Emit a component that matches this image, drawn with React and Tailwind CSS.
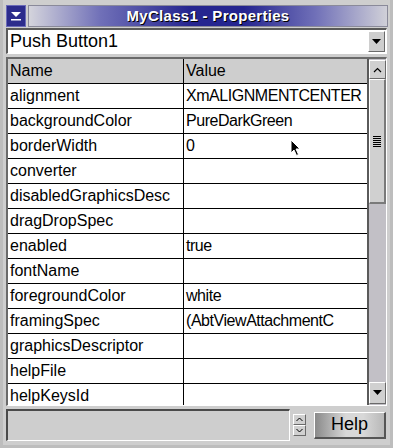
import React from 'react';

const rows = [
    ['alignment', 'XmALIGNMENTCENTER'],
    ['backgroundColor', 'PureDarkGreen'],
    ['borderWidth', '0'],
    ['converter', ''],
    ['disabledGraphicsDesc', ''],
    ['dragDropSpec', ''],
    ['enabled', 'true'],
    ['fontName', ''],
    ['foregroundColor', 'white'],
    ['framingSpec', '(AbtViewAttachmentC'],
    ['graphicsDescriptor', ''],
    ['helpFile', ''],
    ['helpKeysId', ''],
];

const font = { fontFamily: '"Liberation Sans", Arial, sans-serif' };

const Caret = ({ up }) => (
    <svg width="9" height="6" viewBox="0 0 9 6">
        {up ? (
            <path d="M1 5 L4.5 1.5 L8 5" fill="none" stroke="#000" strokeWidth="1.2" />
        ) : (
            <path d="M1 1 L4.5 4.5 L8 1" fill="none" stroke="#000" strokeWidth="1.2" />
        )}
    </svg>
);

const App = () => {
    return (
        <div
            className="w-[393px] h-[448px] bg-[#cecece] flex flex-col overflow-hidden border-l-[3px] border-r-[3px] border-b-[3px] border-[#bdbdbd] relative"
            style={font}
        >
            {/* Title bar */}
            <div className="h-[28px] flex items-stretch pt-[5px] pb-[1px] pl-[3px] pr-[2px] gap-[2px]">
                <div className="w-[20px] bg-[#2c2c8c] border border-[#6a6ab8] flex items-center justify-center">
                    <svg width="12" height="10" viewBox="0 0 12 10">
                        <path d="M1 1 H11 L6 6 Z" fill="#fff" />
                        <rect x="1" y="8" width="10" height="1.5" fill="#fff" />
                    </svg>
                </div>
                <div className="flex-1 flex items-center justify-center border border-[#8a8a9a] bg-[linear-gradient(90deg,#d4d4dc_0%,#7070b8_20%,#25258f_45%,#25258f_60%,#7070b8_80%,#d0d0d8_100%)]">
                    <span className="text-white font-bold text-[15px] tracking-[0.3px] [text-shadow:1px_1px_0_#000]">
                        MyClass1 - Properties
                    </span>
                </div>
            </div>

            {/* Combo */}
            <div className="mx-[3px] h-[26px] flex items-stretch border-t-2 border-l-2 border-[#5a5a5a] border-b border-r border-b-[#ffffff] border-r-[#ffffff] bg-white">
                <div className="flex-1 flex items-center pl-[2px] text-[18px] text-black">Push Button1</div>
                <div className="w-[17px] my-[1px] mr-[1px] bg-[#cecece] border-t border-l border-white border-b border-r border-b-[#6a6a6a] border-r-[#6a6a6a] flex items-center justify-center">
                    <svg width="9" height="6" viewBox="0 0 9 6">
                        <path d="M0 0 H9 L4.5 5 Z" fill="#000" />
                    </svg>
                </div>
            </div>

            {/* Table + scrollbar */}
            <div className="mx-[3px] mt-[3px] h-[349px] flex border-t-2 border-l-2 border-[#6a6a6a] border-b border-r border-b-white border-r-white">
                <div className="flex-1 overflow-hidden bg-white">
                    <div className="h-[25px] flex bg-[#cecece] border-b border-black text-[16px]">
                        <div className="w-[176px] border-r border-black flex items-center pl-[2px]">Name</div>
                        <div className="flex-1 flex items-center pl-[2px]">Value</div>
                    </div>
                    {rows.map(([name, value], i) => (
                        <div key={i} className="h-[25px] flex border-b border-black text-[16px] text-black">
                            <div className="w-[176px] shrink-0 border-r border-black flex items-center pl-[2px] whitespace-nowrap overflow-hidden">
                                {name}
                            </div>
                            <div className="flex-1 flex items-center pl-[2px] whitespace-nowrap overflow-hidden tracking-[-0.45px]">
                                {value}
                            </div>
                        </div>
                    ))}
                </div>
                <div className="w-[19px] bg-[#c2c0c6] border-l-2 border-[#5a5a5a] flex flex-col">
                    <div className="h-[19px] mt-[1px] bg-[#d0d0d0] border-t border-l border-white border-b border-r border-b-[#6a6a6a] border-r-[#6a6a6a] flex items-center justify-center">
                        <Caret up />
                    </div>
                    <div className="h-[125px] bg-[#d0d0d0] border-t border-l border-white border-b-2 border-r-2 border-b-[#7a7a7a] border-r-[#7a7a7a] flex items-center justify-center">
                        <div className="flex flex-col gap-[1px]">
                            {[0, 1, 2, 3, 4, 5].map((k) => (
                                <div key={k} className="w-[8px] h-[1px] bg-black" />
                            ))}
                        </div>
                    </div>
                    <div className="flex-1" />
                    <div className="h-[22px] mb-[1px] bg-[#d0d0d0] border-t border-l border-white border-b border-r border-b-[#6a6a6a] border-r-[#6a6a6a] flex items-center justify-center">
                        <svg width="9" height="6" viewBox="0 0 9 6">
                            <path d="M0 0 H9 L4.5 5 Z" fill="#000" />
                        </svg>
                    </div>
                </div>
            </div>

            {/* Bottom bar */}
            <div className="flex items-center mx-[3px] mt-[3px] gap-[3px]">
                <div className="w-[284px] h-[32px] bg-[#cecece] border-t-2 border-l-2 border-[#4a4a4a] border-b border-r border-b-white border-r-white" />
                <div className="flex flex-col w-[13px]">
                    <div className="h-[11px] bg-[#d0d0d0] border-t border-l border-white border-b border-r border-b-[#6a6a6a] border-r-[#6a6a6a] flex items-center justify-center">
                        <svg width="7" height="5" viewBox="0 0 7 5"><path d="M0.5 4 L3.5 1 L6.5 4" fill="none" stroke="#000" /></svg>
                    </div>
                    <div className="h-[11px] bg-[#d0d0d0] border-t border-l border-white border-b border-r border-b-[#6a6a6a] border-r-[#6a6a6a] flex items-center justify-center">
                        <svg width="7" height="5" viewBox="0 0 7 5"><path d="M0.5 1 L3.5 4 L6.5 1" fill="none" stroke="#000" /></svg>
                    </div>
                </div>
                <div className="ml-[5px] w-[72px] h-[27px] flex items-center justify-center text-[18px] text-black border-t border-l border-white border-b-2 border-r-2 border-b-[#555] border-r-[#555] bg-[linear-gradient(90deg,#8a8a8a_0%,#d8d8d8_45%,#d8d8d8_70%,#b8b8b8_100%)]">
                    Help
                </div>
            </div>

            {/* Mouse cursor */}
            <svg className="absolute left-[287px] top-[139px]" width="12" height="18" viewBox="0 0 12 18">
                <path d="M1 1 L1 14 L4 11 L6.5 16.5 L8.5 15.5 L6 10 L10 10 Z" fill="#000" stroke="#fff" strokeWidth="1" />
            </svg>
        </div>
    );
};

export default App;
